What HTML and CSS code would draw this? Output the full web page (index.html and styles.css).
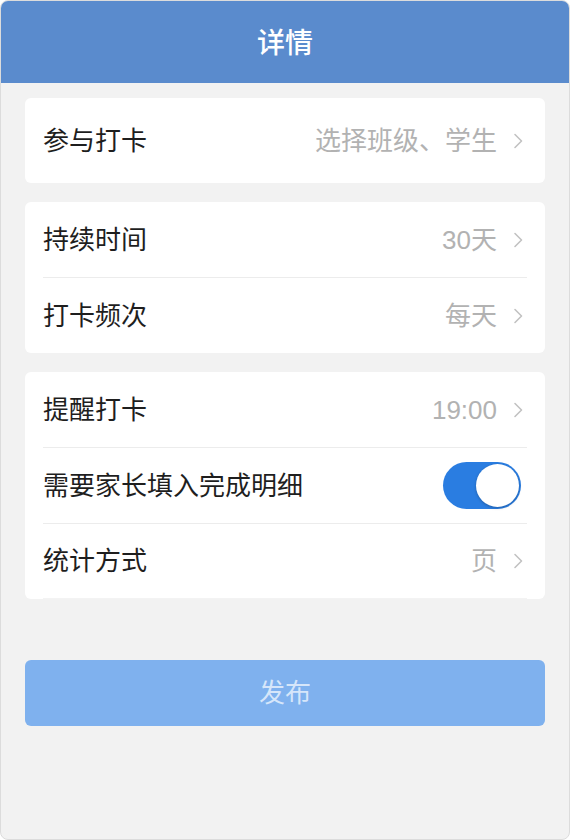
FILE: index.html
```html
<!DOCTYPE html>
<html lang="zh">
<head>
<meta charset="utf-8">
<title>详情</title>
<link rel="stylesheet" href="styles.css">
</head>
<body>
<div class="frame">
  <header class="header">详情</header>
  <main class="content">
    <section class="card card-single">
      <div class="row tall">
        <span class="label">参与打卡</span>
        <span class="value">选择班级、学生</span>
        <svg class="chev" viewBox="0 0 10 16" width="10" height="16"><path d="M2 1.5 L8.5 8 L2 14.5" fill="none" stroke="#c2c2c2" stroke-width="1.6" stroke-linecap="round" stroke-linejoin="round"/></svg>
      </div>
    </section>
    <section class="card">
      <div class="row">
        <span class="label">持续时间</span>
        <span class="value">30天</span>
        <svg class="chev" viewBox="0 0 10 16" width="10" height="16"><path d="M2 1.5 L8.5 8 L2 14.5" fill="none" stroke="#c2c2c2" stroke-width="1.6" stroke-linecap="round" stroke-linejoin="round"/></svg>
      </div>
      <div class="row">
        <span class="label">打卡频次</span>
        <span class="value">每天</span>
        <svg class="chev" viewBox="0 0 10 16" width="10" height="16"><path d="M2 1.5 L8.5 8 L2 14.5" fill="none" stroke="#c2c2c2" stroke-width="1.6" stroke-linecap="round" stroke-linejoin="round"/></svg>
      </div>
    </section>
    <section class="card">
      <div class="row">
        <span class="label">提醒打卡</span>
        <span class="value">19:00</span>
        <svg class="chev" viewBox="0 0 10 16" width="10" height="16"><path d="M2 1.5 L8.5 8 L2 14.5" fill="none" stroke="#c2c2c2" stroke-width="1.6" stroke-linecap="round" stroke-linejoin="round"/></svg>
      </div>
      <div class="row">
        <span class="label">需要家长填入完成明细</span>
        <span class="toggle"><span class="knob"></span></span>
      </div>
      <div class="row last">
        <span class="label">统计方式</span>
        <span class="value">页</span>
        <svg class="chev" viewBox="0 0 10 16" width="10" height="16"><path d="M2 1.5 L8.5 8 L2 14.5" fill="none" stroke="#c2c2c2" stroke-width="1.6" stroke-linecap="round" stroke-linejoin="round"/></svg>
      </div>
    </section>
    <button class="publish">发布</button>
  </main>
</div>
</body>
</html>
```

FILE: styles.css
```css
* { box-sizing: border-box; }
html, body { margin: 0; padding: 0; }
body {
  width: 570px;
  height: 840px;
  font-family: "Liberation Sans", "Noto Sans CJK SC", sans-serif;
  background: #ffffff;
}
.frame {
  width: 570px;
  height: 840px;
  border: 1px solid #dcdcdc;
  border-radius: 8px;
  overflow: hidden;
  background: #f2f2f2;
}
.header {
  height: 82px;
  background: #5a8bcd;
  color: #ffffff;
  font-size: 28px;
  font-weight: 500;
  display: flex;
  align-items: center;
  justify-content: center;
  padding-bottom: 2px;
}
.content {
  padding: 15px 24px 0;
  display: flex;
  flex-direction: column;
  gap: 19px;
}
.card {
  background: #ffffff;
  border-radius: 6px;
  padding: 0 18px;
  display: flex;
  flex-direction: column;
}
.row {
  height: 76px;
  display: flex;
  align-items: center;
  border-bottom: 1px solid #ececec;
}
.row:last-child { border-bottom: none; height: 75px; }
.row.tall { height: 85px; }
.card .row.last { border-bottom: 1px solid #f3f3f3; }
.label {
  flex: 1;
  font-size: 26px;
  color: #1e1e1e;
  line-height: 1;
}
.value {
  font-size: 26px;
  color: #b2b2b2;
  line-height: 1;
  margin-right: 16px;
}
.chev {
  display: block;
  margin-right: 4px;
}
.toggle {
  width: 78px;
  height: 47px;
  margin-right: 6px;
  border-radius: 24px;
  background: #2a7de1;
  display: flex;
  align-items: center;
  justify-content: flex-end;
  padding-right: 2px;
}
.knob {
  width: 43px;
  height: 43px;
  border-radius: 50%;
  background: #ffffff;
  box-shadow: 0 1px 3px rgba(0, 0, 0, 0.25);
}
.publish {
  margin-top: 42px;
  height: 66px;
  border: none;
  border-radius: 6px;
  background: #7fb1ee;
  color: #d6e6fa;
  font-family: "Liberation Sans", "Noto Sans CJK SC", sans-serif;
  font-size: 26px;
  line-height: 1;
  padding: 0;
}
```
